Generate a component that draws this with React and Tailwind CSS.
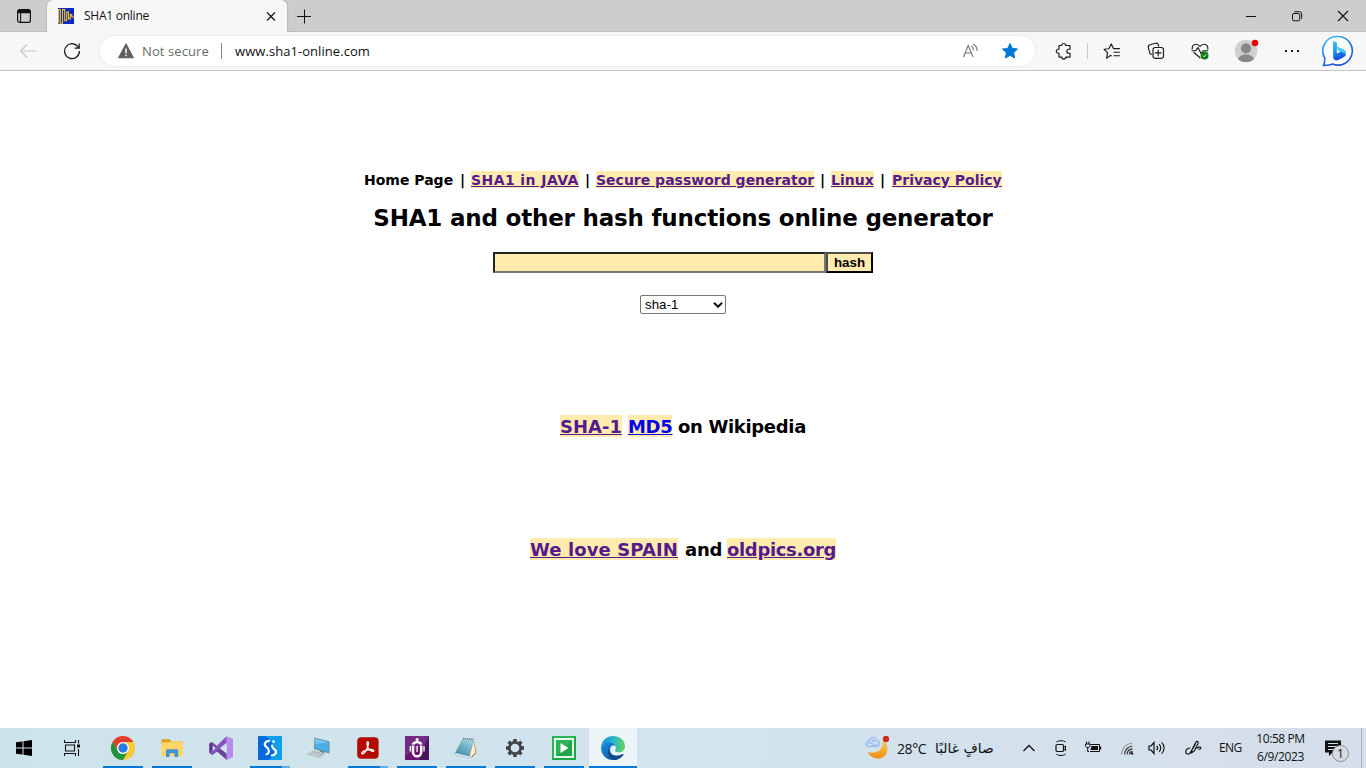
import React from "react";

const Cell = ({ className = "", children }) => (
  <div className={`flex shrink-0 items-center justify-center ${className}`}>{children}</div>
);

const Svg = ({ w = 20, h = 20, children, ...rest }) => (
  <svg width={w} height={h} viewBox={`0 0 ${w} ${h}`} fill="none" className="block shrink-0" {...rest}>
    {children}
  </svg>
);

const line = { stroke: "#1a1a1a", strokeWidth: 1.15, strokeLinecap: "round", strokeLinejoin: "round" };

function TabStrip() {
  return (
    <div className="flex h-8 w-full shrink-0 bg-[#cdcdcd]">
      <Cell className="w-[47px] pl-px shadow-[inset_0_-1px_0_#bdbdbd]">
        <Svg w={16} h={16}>
          <rect x="1.6" y="1.6" width="12.8" height="12.8" rx="2.2" stroke="#111" strokeWidth="1.2" />
          <path d="M1.5 4.2V3.5a2 2 0 0 1 2-2h9a2 2 0 0 1 2 2v1.7h-13z" fill="#111" />
          <path d="M4.6 5v9" stroke="#111" strokeWidth="1.1" />
        </Svg>
      </Cell>
      <div className="flex w-60 shrink-0 items-center rounded-t-[6px] bg-[#f7f7f7] pl-[11px] pr-2 shadow-[0_0_2px_rgba(0,0,0,0.3)]">
        <Svg w={16} h={16}>
          <path d="M0 0h16v16H0z" fill="#0a28c8" />
          <path d="M.6 1v14.500M.6 1.500h1.700v13.800h2.200V1.500h2.200v11.200h2V4h1.800v7h1.800V6.500h1.500V9H16" stroke="#f1c716" strokeWidth="1.100" />
        </Svg>
        <span className="ml-[10px] flex-1 font-['Open_Sans',sans-serif] text-[12px] leading-4 tracking-[-0.25px] text-[#111]">SHA1 online</span>
        <Svg w={16} h={16}>
          <path d="m4 4.500 8 8m0-8-8 8" stroke="#111" strokeWidth="1.150" />
        </Svg>
      </div>
      <div className="flex flex-1 shadow-[inset_0_-1px_0_#bdbdbd]">
        <Cell className="w-[34px]">
          <Svg w={16} h={16}>
            <path d="M1 8.500h14M8.500 1.500v14" stroke="#111" />
          </Svg>
        </Cell>
        <div className="flex-1" />
        <Cell className="w-[46px]">
          <Svg w={12} h={12}><path d="M1 6.500h10" stroke="#111" /></Svg>
        </Cell>
        <Cell className="w-[46px]">
          <Svg w={12} h={12}>
            <rect x="1.500" y="3.500" width="7.300" height="7.300" rx="1.500" stroke="#111" />
            <path d="M3.500 1.700h4.800a2.400 2.400 0 0 1 2.400 2.400v4.700" stroke="#111" />
          </Svg>
        </Cell>
        <Cell className="w-[46px]">
          <Svg w={12} h={12}><path d="m1 1 10 10M11 1 1 11" stroke="#111" strokeWidth="1.100" /></Svg>
        </Cell>
      </div>
    </div>
  );
}

function Toolbar() {
  return (
    <div className="flex h-[39px] w-full shrink-0 items-center border-b border-[#c4c4c4] bg-[#f7f7f7]">
      <Cell className="w-14">
        <Svg w={18} h={16}><path d="M17 8H1.500M8 1.500 1.500 8 8 14.500" stroke="#c8c8c8" strokeWidth="1.200" /></Svg>
      </Cell>
      <Cell className="w-11 pr-3">
        <Svg w={18} h={18}>
          <path d="M15.700 6A7.400 7.400 0 1 0 16.400 9" stroke="#1a1a1a" strokeWidth="1.250" />
          <path d="M16.200 1.500v4.700h-4.700" stroke="#1a1a1a" strokeWidth="1.250" />
        </Svg>
      </Cell>
      <div className="flex h-[30px] w-[935px] shrink-0 items-center rounded-full bg-white pl-[18px] shadow-[0_0_3px_rgba(0,0,0,0.08)]">
        <Svg w={16} h={16}>
          <path d="M8 1 15.300 14.700H.7z" fill="#606060" stroke="#606060" strokeWidth="1.200" strokeLinejoin="round" />
          <path d="M8 5.500v4.700M8 11.500v1.700" stroke="#fff" strokeWidth="1.500" />
        </Svg>
        <span className="ml-2 w-[67px] whitespace-nowrap font-['Open_Sans',sans-serif] text-[13px] leading-4 tracking-[0.1px] text-[#6b6b6b]">Not secure</span>
        <div className="ml-3 h-4 w-px bg-[#8a8a8a]" />
        <span className="ml-[13px] flex-1 whitespace-nowrap font-['Open_Sans',sans-serif] text-[13px] leading-4 tracking-[0.06px] text-[#111]">www.sha1-online.com</span>
        <Cell className="w-[39px]">
          <Svg w={18} h={16}>
            <path d="m1.500 14 4.700-11.500L11 14M3.200 10h6" stroke="#777" strokeWidth="1.150" />
            <path d="M9.500 3.200a4 4 0 0 1 1.800 3.500M11.500 1.200a7 7 0 0 1 3.500 6.300" stroke="#777" strokeWidth="1.100" strokeLinecap="round" />
          </Svg>
        </Cell>
        <Cell className="mr-[5px] w-10">
          <Svg w={18} h={18}>
            <path d="m9 1.500 2.250 4.900 5.250.65-3.900 3.650 1.050 5.300L9 13.400 4.350 16l1.050-5.300L1.500 7.050l5.250-.65z" fill="#0078d4" stroke="#0078d4" strokeWidth="1" strokeLinejoin="round" />
          </Svg>
        </Cell>
      </div>
      <Cell className="ml-[7px] w-11">
        <Svg w={18} h={18}>
          <path d="M4 3.500h2.700a2 2 0 1 1 4 0H15v3.700h-1.200a2 2 0 0 0 0 4H15v3.900h-4.200a2 2 0 1 1-4 0H4v-3.900H3.300a2 2 0 1 1 0-4H4z" {...line} />
        </Svg>
      </Cell>
      <div className="ml-px mr-[2px] h-4 w-px bg-[#cacaca]" />
      <Cell className="w-11">
        <Svg w={18} h={18}>
          <path d="M8.300 13.800 7.500 13.400 3.600 16.200l1-5.400-3.500-3.500 4.700-.6L8.300 2l2.200 4.600h6M11 10.200h5.500M11 13.700h5.500" {...line} />
        </Svg>
      </Cell>
      <Cell className="w-11">
        <Svg w={18} h={18}>
          <path d="M5 12.500 3 11.700 1.400 5.600A2.300 2.300 0 0 1 3 2.800l5.500-1.500a2.300 2.300 0 0 1 2.800 1.500l.4 1.400" {...line} />
          <rect x="6" y="5.500" width="10.500" height="10.800" rx="2.200" {...line} />
          <path d="M11.200 8v5.800M8.300 10.900h5.800" {...line} />
        </Svg>
      </Cell>
      <Cell className="w-11">
        <Svg w={18} h={18}>
          <path d="M1.200 7C.8 4.200 2.500 2.200 4.800 2.200c2 0 3.400 1.100 4.200 2.300.8-1.200 2.200-2.300 4.200-2.300 2.300 0 4 2 3.600 4.800M3 10.500l6 5.300M1 8.700h3.700L7 5.500l3.200 6.200 2-3h4.600" {...line} />
          <circle cx="13.600" cy="13.500" r="3.900" fill="#107c10" />
          <path d="m11.900 13.600 1.200 1.200 2.300-2.500" stroke="#fff" strokeWidth=".9" />
        </Svg>
      </Cell>
      <Cell className="w-12">
        <Svg w={26} h={26}>
          <defs><clipPath id="avatar"><circle cx="13" cy="13" r="11.300" /></clipPath></defs>
          <circle cx="13" cy="13" r="11.300" fill="#d2d0ce" />
          <g clipPath="url(#avatar)" fill="#8a8886">
            <circle cx="13" cy="10.300" r="5.100" />
            <path d="M4.500 24c0-5 3.700-7.500 8.500-7.500s8.500 2.500 8.500 7.500z" />
          </g>
          <circle cx="22" cy="5" r="3.200" fill="#e60000" />
        </Svg>
      </Cell>
      <Cell className="w-[44px]">
        <Svg w={14} h={4}><path d="M0 1h2v2H0zM6 1h2v2H6zM12 1h2v2h-2z" fill="#1a1a1a" /></Svg>
      </Cell>
      <Cell className="w-[48px]">
        <Svg w={32} h={32}>
          <defs>
            <linearGradient id="bubble" x1="4" y1="2" x2="22" y2="31" gradientUnits="userSpaceOnUse">
              <stop stopColor="#34c2f2" /><stop offset=".55" stopColor="#1b73e0" /><stop offset="1" stopColor="#2b4fd3" />
            </linearGradient>
            <linearGradient id="bee" x1="11" y1="6" x2="18" y2="24" gradientUnits="userSpaceOnUse">
              <stop stopColor="#37bdff" /><stop offset=".5" stopColor="#18a0f4" /><stop offset="1" stopColor="#1b48d8" />
            </linearGradient>
          </defs>
          <path d="M16 1.500a14.300 14.300 0 1 1-5.500 27.500c-2 1-5 1.300-9 1.500 1-2 1.300-4 1.300-7.500A14.300 14.300 0 0 1 16 1.500z" fill="#fff" stroke="url(#bubble)" strokeWidth="1.600" />
          <path d="m11.100 6 3.800 1.500v10.900l3.800-1.800-2.600-1.400-1.200-3.500 6.400 2.900c2.100 1 2.800 2.900 2.500 4.600-.2 1.400-1 2.200-2 2.900l-5.300 2.900c-2.800 1.200-5.400-.5-5.400-3.600z" fill="url(#bee)" />
          <path d="m14.900 11.700 6.400 2.900c2.100 1 2.800 2.900 2.500 4.600l-5.100-2.600-2.600-1.400z" fill="#44c8f4" />
        </Svg>
      </Cell>
    </div>
  );
}

const A = ({ className, children }) => (
  <a href="#" className={`block whitespace-nowrap bg-[#ffebad] underline ${className}`}>{children}</a>
);

function Page() {
  return (
    <main className="flex w-full flex-1 flex-col items-center bg-white font-['DejaVu_Sans',sans-serif] font-bold text-black">
      <nav className="mt-[100px] flex h-[17px] w-[638px] text-[14px] leading-[19px]">
        <span className="w-[96px] whitespace-nowrap">Home Page</span>
        <span className="w-[11px]">|</span>
        <A className="w-[108px] tracking-[0.42px] text-[#551a8b]">SHA1 in JAVA</A>
        <span className="w-[17px] pl-[6px]">|</span>
        <A className="w-[218px] text-[#551a8b]">Secure password generator</A>
        <span className="w-[17px] pl-[6px]">|</span>
        <A className="w-[43px] text-[#551a8b]">Linux</A>
        <span className="w-[18px] pl-[6px]">|</span>
        <A className="w-[110px] text-[#551a8b]">Privacy Policy</A>
      </nav>
      <h1 className="mt-4 h-[29px] whitespace-nowrap text-[23px] leading-[29px] tracking-[-0.19px]">SHA1 and other hash functions online generator</h1>
      <form className="mt-[19px] flex h-[21px]" onSubmit={(e) => e.preventDefault()}>
        <input className="h-[21px] w-[333px] rounded-none border-2 border-b-[#767676] border-l-[#222] border-r-[#767676] border-t-[#222] bg-[#ffebad] px-px outline-none" />
        <button className="h-[21px] w-[47px] border-2 border-b-black border-l-[#4c4c4c] border-r-black border-t-[#4c4c4c] bg-[#ffebad] font-['Liberation_Sans',sans-serif] text-[13.333px] font-bold leading-[17px]">hash</button>
      </form>
      <div className="mt-[22px] flex h-[19px] w-[86px] items-center justify-between rounded-[2px] border border-[#767676] bg-white pl-1 pr-[2px] font-['Liberation_Sans',sans-serif] text-[13.333px] font-normal leading-[17px]">
        <span>sha-1</span>
        <Svg w={10} h={8}><path d="m1 1.800 4 4 4-4" stroke="#111" strokeWidth="2" /></Svg>
      </div>
      <p className="mt-[101px] flex h-[22px] w-[246px] text-[18px] leading-[24px]">
        <A className="w-[62px] text-[#551a8b]">SHA-1</A>
        <A className="ml-[6px] w-11 tracking-[-0.3px] text-[#0000ee]">MD5</A>
        <span className="ml-[6px] whitespace-nowrap tracking-[-0.33px]">on Wikipedia</span>
      </p>
      <p className="mt-[101px] flex h-[22px] w-[306px] text-[18px] leading-[24px]">
        <A className="w-[148px] tracking-[0.1px] text-[#551a8b]">We love SPAIN</A>
        <span className="w-[49px] pl-[7px] tracking-[-0.2px]">and</span>
        <A className="w-[109px] tracking-[-0.34px] text-[#551a8b]">oldpics.org</A>
      </p>
    </main>
  );
}

const AppSlot = ({ children, state }) => (
  <div className={`flex h-10 w-12 shrink-0 flex-col items-center ${state === "active" ? "bg-[#edf4f8]" : ""}`}>
    <div className="flex h-[38px] items-center pt-[2px]">{children}</div>
    {state === "open" && <div className="h-[2px] w-10 bg-[#0078d7]" />}
    {state === "many" && (
      <div className="flex h-[2px] w-10"><div className="w-8 bg-[#0078d7]" /><div className="w-2 bg-[#66aee8]" /></div>
    )}
    {state === "active" && <div className="h-[2px] w-12 bg-[#0078d7]" />}
  </div>
);

function TaskApps() {
  return (
    <div className="ml-[3px] flex gap-px">
      <AppSlot state="open">
        <Svg w={24} h={24}>
          <circle cx="12" cy="12" r="12" fill="#fcc934" />
          <path d="M1.600 6A12 12 0 0 1 22.400 6H12a6 6 0 0 0-5.200 9z" fill="#e33b2e" />
          <path d="M1.600 6A12 12 0 0 0 12 24l5.200-9A6 6 0 0 1 6.800 15z" fill="#229342" />
          <circle cx="12" cy="12" r="6" fill="#fff" />
          <circle cx="12" cy="12" r="4.700" fill="#2a78e4" />
        </Svg>
      </AppSlot>
      <AppSlot state="open">
        <Svg w={24} h={24}>
          <path d="M1.500 3.200h8l1.700 2H22a.8.800 0 0 1 .8.800v2H1.500z" fill="#dd9f1a" />
          <path d="M1.500 6.300h8l2-1H22a.8.800 0 0 1 .8.800V20H1.500z" fill="#ffd565" />
          <path d="M6 21v-6.200c0-.9.700-1.600 1.600-1.600h9c.9 0 1.600.7 1.600 1.600V21h-3.700v-3.800h-5V21z" fill="#3d95d5" />
        </Svg>
      </AppSlot>
      <AppSlot>
        <Svg w={24} h={24}>
          <path d="M.5 7.200 3 6l15 12v5.800h-.6L8 15.500 3.200 19 .5 17z" fill="#6a419c" />
          <path d="M.5 7.200V17l3-2.300V9.500z" fill="#52328a" />
          <path d="M.5 17 17.500.2 18 6.500 3.200 18.800z" fill="#8455bf" />
          <path d="m3.600 9.300 3 2.800-3 2.800z" fill="#cfe3eb" />
          <path d="M17.500.2 24 3v18l-6.500 3z" fill="#b98aec" />
          <path d="m17.500 7.300-6 4.700 6 4.700z" fill="#cfe3eb" />
        </Svg>
      </AppSlot>
      <AppSlot state="many">
        <Svg w={24} h={24}>
          <path d="M0 0h24v24H0z" fill="#0869dc" /><path d="M24 0v24H10C20 19 18 7 7 0z" fill="#0da1ec" />
          <path d="M11 4.800C7 5 5.600 8.500 8 10.600c2 1.600 3.200 2.500 2.800 5.200-.2 1.400-1 2-2.300 2.400" stroke="#fff" strokeWidth="2.200" strokeLinecap="round" />
          <path d="M13.800 19.500c4-.2 5.400-3.700 3-5.800-1.900-1.600-3-2.300-2.700-4.200" stroke="#fff" strokeWidth="2.200" strokeLinecap="round" />
          <circle cx="15.600" cy="5.600" r="1.400" fill="#fff" />
        </Svg>
      </AppSlot>
      <AppSlot>
        <Svg w={24} h={24}>
          <path d="m7.500 1.500 15 4v12L7 13z" fill="#6d8794" />
          <path d="m8.300 2.500 13.300 3.700v10L8 12.200z" fill="#4caee9" />
          <path d="m8.300 2.500 13.300 3.700L8.200 8z" fill="#72c6f2" />
          <path d="m12 15 2-.5 4 1.500-2 1z" fill="#697d89" />
          <path d="m6 15 12 3-4.500 3.500L.5 18z" fill="#e1e7ea" stroke="#8d9aa2" strokeWidth=".6" />
          <path d="m4 17 11 3M5.500 16l10.500 3M8 15.700l-5 3.200M12 16.500l-5 3.500M15 17.500 10.500 21" stroke="#9ba8af" strokeWidth=".7" />
        </Svg>
      </AppSlot>
      <AppSlot state="many">
        <Svg w={24} h={24}>
          <rect x="1.200" y="1.300" width="21.400" height="21.400" rx="4" fill="#b30b00" />
          <path d="M11.600 6c1.900 0 .4 4.300-.8 7-1.500 3.200-3.600 5.500-4.800 4.700-1.400-1 2.200-3.200 5.700-3.900 3.400-.7 6.300-.3 6.200.9-.1 1.500-3.800.2-5.400-2.100-1.300-1.800-2-6.600-.9-6.600z" stroke="#fff" strokeWidth="1.300" />
        </Svg>
      </AppSlot>
      <AppSlot state="open">
        <Svg w={24} h={24}>
          <path d="M0 0h24v24H0z" fill="#6a1670" /><path d="M0 0h24v5L0 20z" fill="#722c85" /><path d="M24 0v24H14z" fill="#49155f" />
          <path d="M8 9.500v6.700a4.100 4.100 0 0 0 8.200 0V9.500" stroke="#fff" strokeWidth="2.500" />
          <path d="M6.700 8.600c.2-2.300 2.400-3.600 5.400-3.600s5.200 1.300 5.400 3.600h-3a2.700 2.700 0 0 0-4.800 0z" fill="#fff" />
          <path d="M5.300 10v5.500M19 10v5.500M12.100 10v6" stroke="#fff" strokeWidth="1.300" /><circle cx="12.100" cy="3.600" r="1.500" fill="#fff" />
        </Svg>
      </AppSlot>
      <AppSlot state="open">
        <Svg w={24} h={24}>
          <defs><linearGradient id="pad" x1="18" y1="2" x2="7" y2="21" gradientUnits="userSpaceOnUse"><stop stopColor="#a5dce7" /><stop offset="1" stopColor="#438ca8" /></linearGradient></defs>
          <path d="m19.500 3 3 14-5 5L14 4z" fill="#9b7b40" />
          <path d="m19.300 3.500 2.300 13-5.100 4.800L15 5z" fill="#fff2ca" />
          <path d="M9 2.500 19.700 3.300 15 22 .5 18.500z" fill="url(#pad)" stroke="#70919c" strokeWidth=".5" />
          <path d="m.5 18.500 14.500 3.400.4-1.500L1.300 17z" fill="#e6eef0" />
          <path d="m9 2.300 10.500.9" stroke="#777" strokeWidth="1.200" strokeDasharray="1 1" />
        </Svg>
      </AppSlot>
      <AppSlot state="open">
        <Svg w={24} h={24}>
          <circle cx="12" cy="12" r="5.700" stroke="#404345" strokeWidth="2.700" />
          <g stroke="#404345" strokeWidth="3.400">
            <path d="M12 3v3M12 18v3M3 12h3M18 12h3M5.600 5.600l2.200 2.200M16.200 16.200l2.200 2.200M18.400 5.600l-2.200 2.200M7.800 16.200l-2.200 2.200" />
          </g>
        </Svg>
      </AppSlot>
      <AppSlot state="open">
        <Svg w={24} h={24}>
          <path d="M0 0h24v24H0z" fill="#2cb457" /><path d="M24 0v24H0z" fill="#1fa64b" />
          <rect x="3" y="3" width="18" height="18" stroke="#e8f7ec" strokeWidth="2" />
          <path d="m8.500 7 8 5-8 5z" fill="#fff" />
        </Svg>
      </AppSlot>
      <AppSlot state="active">
        <Svg w={24} h={24}>
          <defs>
            <linearGradient id="edgeTop" x1="1" y1="6" x2="24" y2="9" gradientUnits="userSpaceOnUse"><stop stopColor="#198fcf" /><stop offset=".5" stopColor="#2cb8ce" /><stop offset="1" stopColor="#63d553" /></linearGradient>
            <linearGradient id="edgeLow" x1="2" y1="8" x2="18" y2="24" gradientUnits="userSpaceOnUse"><stop stopColor="#198be0" /><stop offset="1" stopColor="#124897" /></linearGradient>
          </defs>
          <path d="M.1 11C.8 4.200 5.900 0 12 0c7 0 12 4.700 12 10.200 0 3.700-2.700 6.100-6.200 6.100-2.700 0-4-1-3.800-1.900.2-.5.900-.9.900-2.400 0-2.700-2.900-5.200-6.700-5.200C3.900 6.800.9 9 .1 11z" fill="url(#edgeTop)" />
          <path d="M.1 11C1.300 7.800 4.900 6 8.200 6.200c3.700.2 6.100 2.300 6.600 4.600-.8-1.300-2.200-1.500-3.500-1-3.700 1.500-2.900 9.500 3.700 9.900 2.900.2 4.800-.7 6.700-1.700.7-.3 1 .1.600.7A12 12 0 0 1 12 24C5 24-.4 18.200.1 11z" fill="url(#edgeLow)" />
          <path d="M8.800 11.800c-1.400 4.300.8 8 6.200 8 2.900 0 4.800-.8 6.700-1.800.7-.3 1 .1.600.7A12 12 0 0 1 13 24C7.500 22.500 4.800 15.500 8.800 11.800z" fill="#114a8b" />
        </Svg>
      </AppSlot>
    </div>
  );
}

function Tray() {
  return (
    <div className="flex h-10 items-center font-['Open_Sans',sans-serif] text-[12px] text-[#111]">
      <Svg w={24} h={24}>
        <defs><linearGradient id="moon" x1="14" y1="5" x2="12" y2="23" gradientUnits="userSpaceOnUse"><stop stopColor="#ffc94c" /><stop offset="1" stopColor="#f08a13" /></linearGradient></defs>
        <path d="M17.500 3.500C25 8.500 24 22.500 12.700 22.500c-4.500 0-8.200-2.200-10-6.400C12 18.500 19.500 13 17.500 3.500z" fill="url(#moon)" />
        <path d="M3.300 10.500a2.600 2.600 0 0 1 0-5.200c.7-2.700 2.300-4 4.600-4 2.400 0 4 1.600 4.400 3.700a2.800 2.800 0 0 1 .5 5.500z" fill="#c5daf8" stroke="#80a7e6" strokeWidth=".8" />
        <path d="M3 7h5M6 4.500h4M7.500 9h5" stroke="#83a9e5" strokeWidth=".8" />
        <circle cx="21" cy="3" r="3.200" fill="#cf2b20" />
      </Svg>
      <span className="ml-2 w-[38px] whitespace-nowrap text-[14px] tracking-[-0.4px]">28°C</span>
      <span dir="rtl" className="w-[60px] whitespace-nowrap text-left font-['DejaVu_Sans',sans-serif] text-[13.8px] leading-5">صافٍ غالبًا</span>
      <Cell className="ml-[18px] w-8"><Svg w={14} h={10}><path d="m1.500 8 5.500-5.500L12.500 8" stroke="#111" strokeWidth="1.250" /></Svg></Cell>
      <Cell className="w-8">
        <Svg w={16} h={18}>
          <rect x="3" y="5.500" width="7.500" height="7" rx="1.300" stroke="#111" strokeWidth="1.200" />
          <path d="m10.500 8.500 2-1.500v4.500l-2-1.500M3.500 2.900c2.500-1.600 6.500-1.600 9 0M3.500 15.300c2.500 1.600 6.500 1.600 9 0" stroke="#111" />
        </Svg>
      </Cell>
      <Cell className="w-8">
        <Svg w={18} h={16}>
          <path d="M6.500 4.500h9v7H6" stroke="#111" /><path d="M7.500 6H14v4H6.500zM16 6.500h1.200v3H16z" fill="#111" />
          <path d="M2.500 1.500V4M5 1.500V4M3.700 7v4.500H5" stroke="#111" /><path d="M1.500 4h4.500v2.300L4.700 7.500H2.800L1.500 6.300z" fill="#d3dfea" stroke="#111" />
        </Svg>
      </Cell>
      <Cell className="ml-[2px] w-8">
        <Svg w={14} h={14}>
          <path d="M1.500 13.500A12 12 0 0 1 12.500 2" stroke="#999" strokeWidth="1.100" />
          <path d="M4.500 13.500A9 9 0 0 1 12.500 5M7 13.500a6.200 6.200 0 0 1 5.500-5.700M9.300 13.500a3.500 3.500 0 0 1 3.200-3.200" stroke="#333" strokeWidth="1.200" /><circle cx="12" cy="12.500" r="1.200" fill="#111" />
        </Svg>
      </Cell>
      <Cell className="w-7">
        <Svg w={18} h={14}>
          <path d="M1 5h2l3-3.500v11L3 9H1z" stroke="#111" strokeWidth="1.200" />
          <path d="M8.700 4.800a3.300 3.300 0 0 1 0 4.400M11.200 3.200a5.500 5.500 0 0 1 0 7.600M13.700 1.300a8 8 0 0 1 0 11.400" stroke="#111" strokeWidth="1.150" />
        </Svg>
      </Cell>
      <Cell className="ml-px w-[42px]">
        <Svg w={18} h={18}>
          <path d="m7.700 13.800.3-3L12 3c.8-1.300 2.800-.4 2.200 1.200l-4 8z" stroke="#111" strokeWidth="1.150" />
          <path d="M6.300 9C1.500 9 .5 14.700 3.300 15c2.300.2 3.700-1.700 4.400-4M12.500 9.500c2.500-2.200 5-1.300 4.300 0-.6 1-1.800.8-2.300.3M11.500 4.500l-2.500 5" stroke="#111" strokeWidth="1.150" />
        </Svg>
      </Cell>
      <span className="ml-[5px] w-[33px] tracking-[-0.55px]">ENG</span>
      <div className="flex w-[57px] flex-col text-center leading-[18px] tracking-[-0.4px]">
        <span className="whitespace-nowrap">10:58 PM</span>
        <span className="whitespace-nowrap">6/9/2023</span>
      </div>
      <Cell className="ml-[14px] w-[28px]">
        <div className="relative">
          <Svg w={28} h={28}>
            <path d="M2 6.500h16v12H9.500L6 22v-3.500H2z" fill="#111" />
            <path d="M5 9.500h10M5 12.500h10M5 15.500h6" stroke="#d4deea" />
            <circle cx="17.500" cy="19.500" r="8" fill="#d7dade" stroke="#8c9094" />
          </Svg>
          <span className="absolute left-[14px] top-[12px] text-[12px] leading-4">1</span>
        </div>
      </Cell>
      <div className="ml-[10px] mr-1 h-10 w-px bg-[#aab8c4]" />
    </div>
  );
}

function Taskbar() {
  return (
    <footer className="flex h-10 w-full shrink-0 justify-between bg-linear-to-r from-[#cde3ea] via-[#d2e4ee] to-[#d5deea]">
      <div className="flex">
        <Cell className="w-12">
          <Svg w={16} h={16}><path d="m0 2.300 6.500-.9v6.100H0zM7.500 1.200 16 0v7.500H7.500zM0 8.500h6.500v6.100L0 13.700zM7.500 8.500H16V16l-8.500-1.200z" fill="#000" /></Svg>
        </Cell>
        <Cell className="w-12">
          <Svg w={16} h={16}><path d="M.5 0v2.500h11V0M.5 16v-2.500h11V16M1.500 5h9v6h-9zM14.500 0v3.500M14.500 9v7" stroke="#111" strokeWidth="1.100" /><path d="M13 4.500h3v3h-3z" fill="#111" /></Svg>
        </Cell>
        <TaskApps />
      </div>
      <Tray />
    </footer>
  );
}

export default function App() {
  return (
    <div className="flex h-[768px] w-[1366px] flex-col overflow-hidden bg-white">
      <TabStrip />
      <Toolbar />
      <Page />
      <Taskbar />
    </div>
  );
}
